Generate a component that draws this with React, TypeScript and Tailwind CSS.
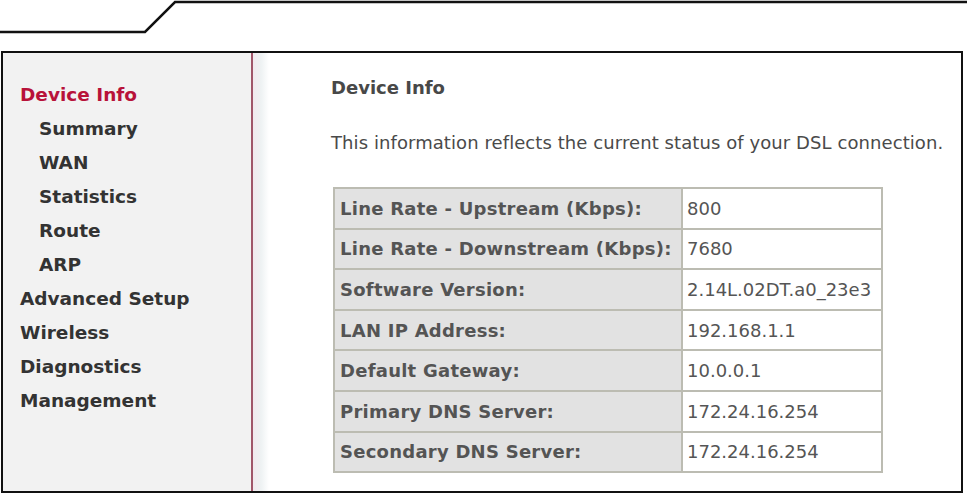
import React from "react";

const font = { fontFamily: '"DejaVu Sans", Verdana, sans-serif' };

const nav: { label: string; sub?: boolean; active?: boolean }[] = [
  { label: "Device Info", active: true },
  { label: "Summary", sub: true },
  { label: "WAN", sub: true },
  { label: "Statistics", sub: true },
  { label: "Route", sub: true },
  { label: "ARP", sub: true },
  { label: "Advanced Setup" },
  { label: "Wireless" },
  { label: "Diagnostics" },
  { label: "Management" },
];

const rows: [string, string][] = [
  ["Line Rate - Upstream (Kbps):", "800"],
  ["Line Rate - Downstream (Kbps):", "7680"],
  ["Software Version:", "2.14L.02DT.a0_23e3"],
  ["LAN IP Address:", "192.168.1.1"],
  ["Default Gateway:", "10.0.0.1"],
  ["Primary DNS Server:", "172.24.16.254"],
  ["Secondary DNS Server:", "172.24.16.254"],
];

export default function App() {
  return (
    <div className="w-[967px] h-[493px] bg-white overflow-hidden flex flex-col" style={font}>
      <svg width="967" height="51" className="block shrink-0">
        <polyline
          points="0,32 145,32 175,2 967,2"
          fill="none"
          stroke="#111"
          strokeWidth="2.5"
        />
      </svg>
      <div className="ml-[1px] w-[962px] h-[442px] border-2 border-[#111] flex">
        <div className="w-[248px] bg-[#f2f2f2] pt-[25px] pl-[17px] flex flex-col">
          {nav.map((n) => (
            <div
              key={n.label}
              className={
                "h-[34px] leading-[34px] text-[18.5px] font-bold whitespace-nowrap " +
                (n.sub ? "pl-[19px] " : "") +
                (n.active ? "text-[#b8123a]" : "text-[#333333]")
              }
            >
              {n.label}
            </div>
          ))}
        </div>
        <div className="w-[2px] bg-[#a0566a]" />
        <div className="w-[16px] bg-gradient-to-r from-[#f1e9ee] via-[#eef2f3] to-[#ffffff]" />
        <div className="flex-1 pl-[62px] pt-[23px]">
          <div className="h-[24px] leading-[24px] text-[18px] font-bold text-[#484848]">
            Device Info
          </div>
          <div className="mt-[31px] h-[24px] leading-[24px] text-[18px] text-[#4a4a4a] whitespace-nowrap tracking-[0.08px]">
            This information reflects the current status of your DSL connection.
          </div>
          <table className="mt-[32px] ml-[2px] w-[550px] border-collapse border-2 border-[#b4b4aa]">
            <tbody>
              {rows.map(([k, v]) => (
                <tr key={k} className="h-[40.6px]">
                  <td className="w-[348px] bg-[#e2e2e2] border-2 border-[#bcbcb2] pl-[5px] text-[18px] font-bold text-[#545454] whitespace-nowrap tracking-[0.25px]">
                    {k}
                  </td>
                  <td className="bg-white border-2 border-[#bcbcb2] pl-[4px] text-[18px] text-[#555555] whitespace-nowrap">
                    {v}
                  </td>
                </tr>
              ))}
            </tbody>
          </table>
        </div>
      </div>
    </div>
  );
}
